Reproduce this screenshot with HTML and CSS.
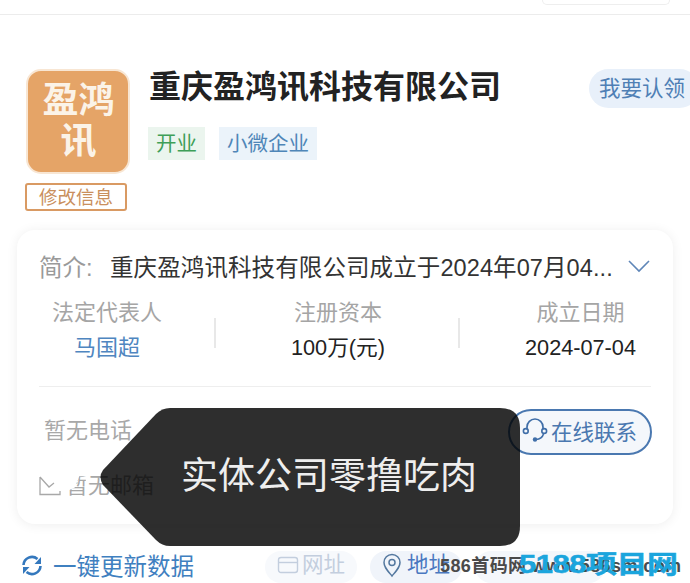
FILE: index.html
```html
<!DOCTYPE html>
<html lang="zh-CN">

<head>
    <meta charset="UTF-8">
    <meta name="viewport" content="width=device-width, initial-scale=1.0">
    <title>重庆盈鸿讯科技有限公司</title>
    <link rel="stylesheet" href="styles.css">
</head>

<body>
    <div class="page">
        <div class="topBar">
            <div class="topPill"></div>
        </div>

        <div class="header">
            <div class="logoCol">
                <div class="logo">盈鸿<br>讯</div>
                <div class="editBtn">修改信息</div>
            </div>
            <div class="headInfo">
                <h1 class="companyName">重庆盈鸿讯科技有限公司</h1>
                <div class="tags">
                    <span class="tag tagGreen">开业</span>
                    <span class="tag tagBlue">小微企业</span>
                </div>
            </div>
            <div class="claimBtn">我要认领</div>
        </div>

        <div class="card">
            <div class="introRow">
                <span class="introLabel">简介:</span>
                <span class="introText">重庆盈鸿讯科技有限公司成立于2024年07月04...</span>
                <svg class="chevron" width="24" height="14" viewBox="0 0 24 14">
                    <path d="M2 2 L12 12 L22 2" fill="none" stroke="#5f86b8" stroke-width="1.6" />
                </svg>
            </div>
            <div class="stats">
                <div class="stat">
                    <div class="statLabel">法定代表人</div>
                    <div class="statValue statLink">马国超</div>
                </div>
                <div class="stat">
                    <div class="statLabel">注册资本</div>
                    <div class="statValue">100万(元)</div>
                </div>
                <div class="stat">
                    <div class="statLabel">成立日期</div>
                    <div class="statValue">2024-07-04</div>
                </div>
            </div>
            <div class="contact">
                <div class="contactLines">
                    <div class="contactText">暂无电话</div>
                    <div class="contactText mailLine">
                        <svg class="mailIcon" width="22" height="20" viewBox="0 0 22 20">
                            <path d="M1 1 V18.5 H21 V15 M1 1 L10 11 L15 7" fill="none" stroke="#a8a8a8" stroke-width="1.3" />
                        </svg>
                        <span class="mailGap">暂</span>无邮箱
                    </div>
                </div>
                <div class="onlineBtn">
                    <svg width="26" height="26" viewBox="0 0 26 26">
                        <path d="M5 12 V10 a8 8 0 0 1 16 0 V12" fill="none" stroke="#3f6ea8" stroke-width="1.7" />
                        <circle cx="3.8" cy="14" r="2.4" fill="none" stroke="#3f6ea8" stroke-width="1.6" />
                        <circle cx="22.2" cy="14" r="2.4" fill="none" stroke="#3f6ea8" stroke-width="1.6" />
                        <path d="M21.5 17 Q20 22 14 22.5" fill="none" stroke="#3f6ea8" stroke-width="1.6" />
                        <circle cx="13" cy="22.5" r="2.2" fill="#3f6ea8" />
                    </svg>
                    <span>在线联系</span>
                </div>
            </div>
        </div>

        <div class="actions">
            <div class="refresh">
                <svg width="22" height="24" viewBox="0 0 22 24">
                    <path d="M2.5 12 a8.5 8.5 0 0 1 14 -6" fill="none" stroke="#3478bd" stroke-width="2.6" />
                    <path d="M19.5 13 a8.5 8.5 0 0 1 -14 6" fill="none" stroke="#3478bd" stroke-width="2.6" />
                    <path d="M20 4 V11 H13.5 Z" fill="#3478bd" />
                    <path d="M2 21 V14 H8.5 Z" fill="#3478bd" />
                </svg>
                <span>一键更新数据</span>
            </div>
            <div class="chip chipOff">
                <svg width="22" height="20" viewBox="0 0 22 20">
                    <rect x="1.5" y="2.5" width="19" height="15" rx="2.5" fill="none" stroke="#c3cede" stroke-width="1.4" />
                    <path d="M1.5 7.5 H20.5" stroke="#c3cede" stroke-width="1.4" />
                </svg>
                <span>网址</span>
            </div>
            <div class="chip chipAddr">
                <svg width="20" height="26" viewBox="0 0 20 26">
                    <path d="M10 24 C5 18 2 15 2 10.5 a8 8 0 0 1 16 0 C18 15 15 18 10 24 Z" fill="none" stroke="#54789f" stroke-width="1.5" />
                    <circle cx="10" cy="10.5" r="3" fill="none" stroke="#54789f" stroke-width="1.5" />
                </svg>
                <span>地址</span>
            </div>
            <div class="chip chipHidden"></div>
        </div>

        <!-- overlay toast and watermark -->
        <div class="toast">实体公司零撸吃肉</div>
        <div class="wmSmall">586首码网 www.586sm.com</div>
        <div class="wmBig">5188项目网</div>
    </div>
</body>

</html>
```
FILE: styles.css
```css
* {
    box-sizing: border-box;
}

body {
    margin: 0;
    background: #fff;
    font-family: "Liberation Sans", "Noto Sans CJK SC", sans-serif;
}

.page {
    width: 690px;
    height: 583px;
    position: relative;
    overflow: hidden;
    background: #fff;
}

.topBar {
    height: 15px;
    border-bottom: 1px solid #ececec;
    display: flex;
    justify-content: flex-end;
    padding-right: 20px;
}

.topPill {
    width: 128px;
    height: 5px;
    border: 1px solid #eeeeee;
    border-top: none;
    border-radius: 0 0 14px 14px;
}

.header {
    display: flex;
    padding: 54px 0 0 25px;
    height: 215px;
}

.logoCol {
    width: 106px;
    display: flex;
    flex-direction: column;
    align-items: flex-start;
}

.logo {
    width: 104px;
    height: 105px;
    margin-left: 1px;
    background: #e5a467;
    border: 2px solid #f8e6d3;
    border-radius: 15px;
    color: #fbf3e8;
    font-size: 36px;
    font-weight: bold;
    line-height: 41px;
    text-align: center;
    padding: 9px 0 0 1px;
}

.editBtn {
    width: 102px;
    height: 28px;
    margin-top: 9px;
    border: 2px solid #d99a63;
    border-radius: 3px;
    color: #c98f5d;
    font-size: 18.5px;
    line-height: 25px;
    text-align: center;
}

.headInfo {
    margin-left: 18px;
    width: 440px;
}

.companyName {
    margin: 0;
    font-size: 32px;
    line-height: 36px;
    font-weight: bold;
    color: #222;
}

.tags {
    display: flex;
    gap: 14px;
    margin-top: 22px;
    margin-left: -1px;
}

.tag {
    height: 33px;
    font-size: 20.5px;
    line-height: 33px;
    padding: 0 8px;
}

.tagGreen {
    background: #ebf5ee;
    color: #3f9f58;
}

.tagBlue {
    background: #ebf3fa;
    color: #4f86b8;
}

.claimBtn {
    position: absolute;
    left: 589px;
    top: 69px;
    width: 110px;
    height: 39px;
    padding-left: 10px;
    border-radius: 20px;
    background: #e8f0fa;
    color: #4f7fb5;
    font-size: 21.5px;
    line-height: 41px;
    white-space: nowrap;
}

.card {
    margin: 0 17px;
    height: 294px;
    padding: 0 22px;
    background: #fff;
    border-radius: 18px;
    box-shadow: 0 1px 12px rgba(0, 0, 0, 0.07);
}

.introRow {
    display: flex;
    align-items: center;
    height: 72px;
    white-space: nowrap;
}

.introLabel {
    color: #9a9a9a;
    font-size: 23.5px;
    width: 71px;
    flex: none;
}

.introText {
    color: #333;
    font-size: 23.5px;
    flex: 1;
    letter-spacing: 0.1px;
}

.chevron {
    flex: none;
}

.stats {
    display: flex;
    height: 87px;
    border-bottom: 1px solid #eeeeee;
    margin-top: -2px;
}

.stat {
    text-align: center;
    position: relative;
}

.stat:nth-child(1) {
    width: 177px;
    padding-right: 41px;
}

.stat:nth-child(2) {
    width: 244px;
}

.stat:nth-child(3) {
    flex: 1;
    padding-left: 50px;
}

.stat:not(:last-child)::after {
    content: "";
    position: absolute;
    right: 0;
    top: 18px;
    width: 2px;
    height: 30px;
    background: #e8e8e8;
}

.statLabel {
    color: #a5a5a5;
    font-size: 22px;
    line-height: 26px;
}

.statValue {
    margin-top: 9px;
    color: #222;
    font-size: 21.7px;
    line-height: 26px;
}

.statValue.statLink {
    color: #4f86c0;
    font-size: 22px;
}

.contact {
    display: flex;
    justify-content: space-between;
    padding: 22px 0 0 5px;
}

.contactLines {
    display: flex;
    flex-direction: column;
    gap: 27px;
    margin-top: 8px;
}

.contactText {
    color: #a8a8a8;
    font-size: 22px;
    line-height: 28px;
}

.mailLine {
    display: flex;
    align-items: center;
    margin-left: -5px;
}

.mailIcon {
    margin-right: 5px;
}

/* only the lower part of this glyph is left in the screenshot */
.mailGap {
    clip-path: polygon(0 70%, 40% 55%, 60% 15%, 90% 15%, 90% 100%, 0 100%);
}

.onlineBtn {
    display: flex;
    align-items: center;
    gap: 3px;
    width: 144px;
    height: 46px;
    padding: 0 0 4px 12px;
    margin-right: -1px;
    border: 2px solid #4a78b0;
    border-radius: 23px;
    background: #f4f7fb;
    color: #4a78b0;
    font-size: 21.5px;
    white-space: nowrap;
}

.actions {
    display: flex;
    align-items: flex-start;
    padding: 27px 0 0 21px;
    height: 59px;
}

.refresh {
    display: flex;
    align-items: center;
    gap: 10px;
    width: 244px;
    height: 28px;
    color: #3f80c0;
    font-size: 23.5px;
    white-space: nowrap;
}

.chip {
    display: flex;
    align-items: flex-start;
    gap: 5px;
    flex: none;
    height: 32px;
    padding: 1px 12px 0;
    margin-right: 15px;
    border-radius: 16px;
    background: #f0f4fa;
    color: #4a78c0;
    font-size: 21.5px;
    line-height: 26px;
    white-space: nowrap;
}

.chipOff {
    gap: 3px;
    margin-right: 13px;
    color: #c3cede;
    background: #f7f9fc;
}

.chipOff svg {
    margin-top: 3px;
}

.chipHidden {
    width: 130px;
    margin-right: 0;
    margin-left: -2px;
    background: #f4f7fb;
}

/* toast sits over the card, the card still shows through a little */
.toast {
    position: absolute;
    left: 100px;
    top: 408px;
    width: 420px;
    height: 138px;
    padding-left: 81px;
    background: rgba(0, 0, 0, 0.82);
    clip-path: path("M70 0 H400 Q420 0 420 20 V118 Q420 138 400 138 H70 Q62 138 56 132 L3 77 Q-2 69 3 62 L56 6 Q62 0 70 0 Z");
    color: #eeeeee;
    font-size: 37px;
    line-height: 138px;
    white-space: nowrap;
}

.wmSmall {
    position: absolute;
    left: 440px;
    top: 553px;
    color: #4a4a4a;
    font-size: 18px;
    line-height: 26px;
    font-weight: bold;
    letter-spacing: 0.4px;
    white-space: nowrap;
}

.wmBig {
    position: absolute;
    left: 519px;
    top: 548px;
    color: #1ba5dd;
    font-size: 31px;
    font-weight: bold;
    line-height: 33px;
    letter-spacing: -0.5px;
    white-space: nowrap;
    transform: scaleY(0.82);
    -webkit-text-stroke: 0.6px #1ba5dd;
}
```
